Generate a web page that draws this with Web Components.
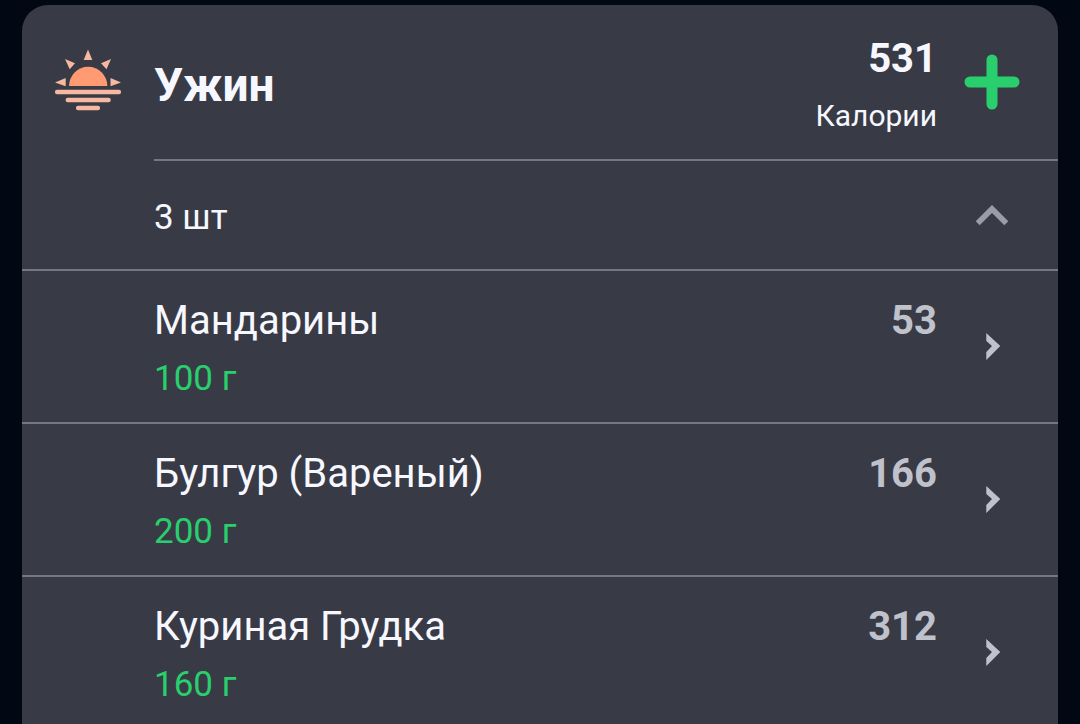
<!DOCTYPE html>
<html lang="ru">
<head>
<meta charset="utf-8">
<meta name="viewport" content="width=device-width, initial-scale=1">
<title>Ужин</title>
<style>
    body {
        margin: 0;
        padding: 5px 22px 0;
        background: #010814;
        color: #f7f7ff;
        font-family: Roboto, "Liberation Sans", sans-serif;
        --card: #383b46;
        --line: #757883;
        --muted: #bfc1cb;
        --accent: #28cf6c;
    }
</style>
</head>
<body>
<meal-card>
    <meal-header slot="header" calories="531" unit="Калории">Ужин</meal-header>
    <meal-summary>3 шт</meal-summary>
    <food-item calories="53" amount="100 г">Мандарины</food-item>
    <food-item calories="166" amount="200 г">Булгур (Вареный)</food-item>
    <food-item calories="312" amount="160 г">Куриная Грудка</food-item>
</meal-card>

<script>
const cardTemplate = document.createElement("template");
cardTemplate.innerHTML = /* html */ `
<style>
    :host {
        display: block;
        overflow: hidden;
        border-radius: 26px 26px 0 0;
        background: var(--card);
    }
    :host([collapsed]) ::slotted(food-item) {
        display: none;
    }
</style>
<slot name="header"></slot>
<slot></slot>
`

class MealCard extends HTMLElement {
    constructor(){
        super();
        this.attachShadow({mode:"open"});
        this.shadowRoot.appendChild(cardTemplate.content.cloneNode(true));
    }

    connectedCallback() {
        this.addEventListener("meal-toggle", (event) => {
            this.toggleAttribute("collapsed", !event.detail);
        })
    }
}

const headerTemplate = document.createElement("template");
headerTemplate.innerHTML = /* html */ `
<style>
    :host {
        display: block;
    }
    header {
        display: grid;
        grid-template-columns: 68px 1fr auto 56px;
        align-items: center;
        padding: 30px 38px 25px 32px;
    }
    h1 {
        margin: 0 0 0 32px;
        font-size: 46px;
        line-height: 56px;
        font-weight: 700;
    }
    .total {
        display: flex;
        flex-direction: column;
        gap: 15px;
        margin-right: 27px;
        text-align: right;
    }
    strong {
        font-size: 40px;
        line-height: 48px;
    }
    .unit {
        font-size: 30px;
        line-height: 36px;
    }
    button {
        padding: 0;
        border: 0;
        background: none;
        color: var(--accent);
        cursor: pointer;
    }
    svg {
        display: block;
        padding-bottom: 6px;
    }
    .line {
        margin-left: 132px;
        height: 2px;
        background: var(--line);
    }
</style>
<header>
    <svg width="68" height="68" viewBox="0 0 68 68" aria-hidden="true">
        <path fill="#ff9a72" d="M15 38A19.200 19.200 0 1 1 53.400 38H15z"/>
        <g fill="#f6b8a1">
            <path d="M34 1.500L38.300 12H29.700z"/>
            <path d="M11 11L21 15.300L15.700 21.300z"/>
            <path d="M57 11L52.500 21.300L47 15.300z"/>
            <path d="M1 34.500L11.700 30V38.300z"/>
            <path d="M67 34.500L56.500 30V38.300z"/>
            <rect x="1" y="41.700" width="66" height="4.600" rx="2"/>
            <rect x="11.700" y="49.700" width="45" height="4.600" rx="2"/>
            <rect x="22" y="57.700" width="24" height="4.600" rx="2"/>
        </g>
    </svg>
    <h1><slot></slot></h1>
    <div class="total">
        <strong></strong>
        <span class="unit"></span>
    </div>
    <button type="button" aria-label="Добавить">
        <svg width="56" height="56" viewBox="0 0 56 56" stroke="currentColor" stroke-width="11" stroke-linecap="round">
            <path d="M28 6V50M6 28H50"/>
        </svg>
    </button>
</header>
<div class="line"></div>
`

class MealHeader extends HTMLElement {
    constructor(){
        super();
        this.attachShadow({mode:"open"});
        this.shadowRoot.appendChild(headerTemplate.content.cloneNode(true));
    }

    connectedCallback() {
        this.shadowRoot.querySelector("strong").textContent = this.getAttribute("calories");
        this.shadowRoot.querySelector(".unit").textContent = this.getAttribute("unit");
    }
}

const summaryTemplate = document.createElement("template");
summaryTemplate.innerHTML = /* html */ `
<style>
    :host {
        display: block;
    }
    button {
        display: flex;
        align-items: center;
        justify-content: space-between;
        width: 100%;
        box-sizing: border-box;
        padding: 35px 38px 29px 132px;
        border: 0;
        background: none;
        color: inherit;
        font: inherit;
        font-size: 35px;
        line-height: 44px;
        text-align: left;
        cursor: pointer;
    }
    svg {
        display: block;
        color: #9a9ca7;
    }
    button[aria-expanded="false"] svg {
        transform: rotate(180deg);
    }
</style>
<button type="button" aria-expanded="true">
    <span><slot></slot></span>
    <svg width="56" height="44" viewBox="0 0 56 44" fill="none" stroke="currentColor" stroke-width="5.600" aria-hidden="true">
        <path d="M13.700 27.200L28 12.900L42.300 27.200"/>
    </svg>
</button>
`

class MealSummary extends HTMLElement {
    constructor(){
        super();
        this.attachShadow({mode:"open"});
        this.shadowRoot.appendChild(summaryTemplate.content.cloneNode(true));
    }

    connectedCallback() {
        const button = this.shadowRoot.querySelector("button");
        button.addEventListener("click", () => {
            const expanded = button.getAttribute("aria-expanded") !== "true";
            button.setAttribute("aria-expanded", expanded);
            this.dispatchEvent(new CustomEvent("meal-toggle", {
                bubbles: true,
                composed: true,
                detail: expanded
            }))
        })
    }
}

const itemTemplate = document.createElement("template");
itemTemplate.innerHTML = /* html */ `
<style>
    :host {
        display: block;
        border-top: 2px solid var(--line);
    }
    a {
        display: grid;
        grid-template-columns: 1fr auto 56px;
        column-gap: 27px;
        padding: 26px 38px 21px 132px;
        color: inherit;
        text-decoration: none;
    }
    .food {
        display: flex;
        flex-direction: column;
        gap: 12px;
    }
    .name, strong {
        font-size: 40px;
        line-height: 48px;
    }
    .amount {
        font-size: 35px;
        line-height: 44px;
        color: var(--accent);
    }
    strong, svg {
        color: var(--muted);
    }
    svg {
        align-self: center;
    }
</style>
<a href="#">
    <span class="food">
        <span class="name"><slot></slot></span>
        <span class="amount"></span>
    </span>
    <strong></strong>
    <svg width="56" height="32" viewBox="0 0 56 32" fill="currentColor" aria-hidden="true">
        <path d="M22.300 0L36.300 13L22.300 27V19L28 13L22.300 8z"/>
    </svg>
</a>
`

class FoodItem extends HTMLElement {
    constructor(){
        super();
        this.attachShadow({mode:"open"});
        this.shadowRoot.appendChild(itemTemplate.content.cloneNode(true));
    }

    connectedCallback() {
        this.shadowRoot.querySelector("strong").textContent = this.getAttribute("calories");
        this.shadowRoot.querySelector(".amount").textContent = this.getAttribute("amount");
    }
}

customElements.define("meal-card", MealCard);
customElements.define("meal-header", MealHeader);
customElements.define("meal-summary", MealSummary);
customElements.define("food-item", FoodItem);
</script>
</body>
</html>
